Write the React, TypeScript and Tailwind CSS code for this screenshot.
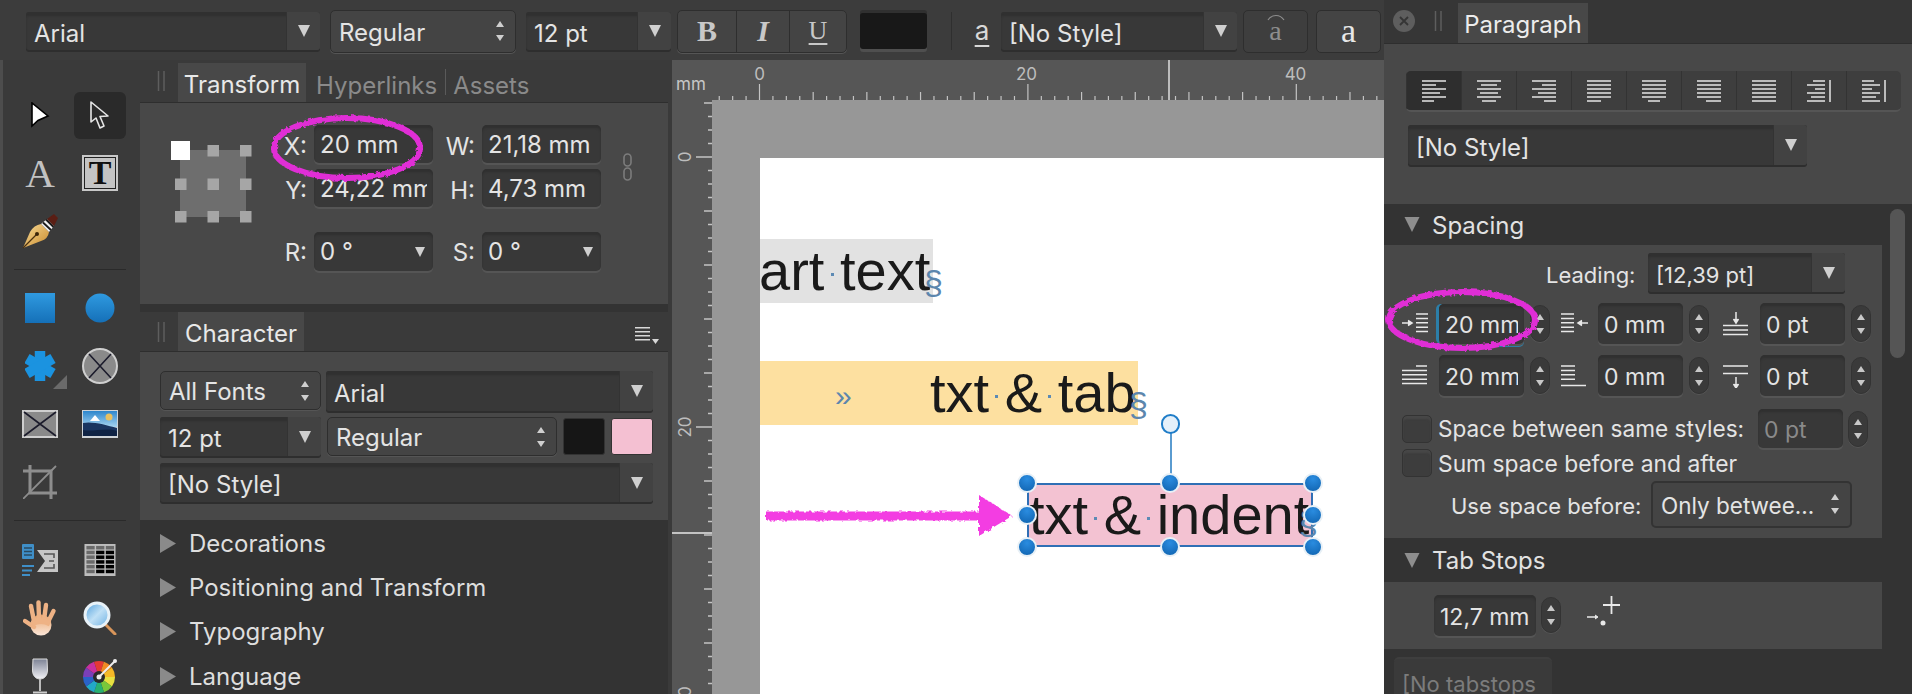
import React from "react";

const Tri = ({ c = "#cfcfcf", w = 12, h = 12 }: { c?: string; w?: number; h?: number }) => (
  <svg width={w} height={h} viewBox="0 0 12 12"><polygon points="0,0 12,0 6,12" fill={c} /></svg>
);
const UpDown = ({ c = "#cfcfcf", w = 10 }: { c?: string; w?: number }) => (
  <svg width={w} height={22} viewBox="0 0 10 22">
    <polygon points="5,1 9,7 1,7" fill={c} />
    <polygon points="5,21 9,15 1,15" fill={c} />
  </svg>
);
const Drop = ({ className = "", label, arrow = "w-[34px]" }: { className?: string; label: string; arrow?: string }) => (
  <div className={`flex items-stretch rounded-[3px] bg-[#383838] shadow-[inset_0_4px_2px_#303030,0_2px_0_#2e2e2e] ${className}`}>
    <div className="flex-1 min-w-0 pl-[8px] pt-[5px] flex items-center overflow-hidden whitespace-nowrap">{label}</div>
    <div className={`${arrow} border-l border-[#333] bg-[#424242] rounded-r-[3px] flex items-center justify-center`}><Tri /></div>
  </div>
);
const Sel = ({ className = "", label }: { className?: string; label: string }) => (
  <div className={`flex items-center justify-between pl-[8px] pr-[10px] rounded-[5px] bg-[#444444] border border-[#2e2e2e] shadow-[0_1px_0_#555] ${className}`}>
    <span className="whitespace-nowrap pt-[3px]">{label}</span>
    <UpDown />
  </div>
);
const Field = ({ className = "", label }: { className?: string; label: string }) => (
  <div className={`flex items-center pl-[6px] pr-[6px] pt-[2px] rounded-[5px] bg-[#383838] shadow-[inset_0_3px_2px_#303030,0_2px_0_#555] ${className}`}>
    <span className="block w-full overflow-hidden whitespace-nowrap">{label}</span>
  </div>
);
const Stepper = ({ className = "" }: { className?: string }) => (
  <div className={`w-[20px] rounded-full bg-[#3a3a3a] border border-[#333] shadow-[0_1px_0_#555] flex items-center justify-center ${className}`}><UpDown c="#c8c8c8" /></div>
);
const Grip = ({ className = "" }: { className?: string }) => (
  <svg className={className} width="9" height="22" viewBox="0 0 9 22"><path d="M1.5 1V21M7 1V21" stroke="#5e5e5e" strokeWidth="1.5" /></svg>
);

/* ---------- tool icons ---------- */
const ToolArrow = () => (
  <svg width="20" height="26" viewBox="0 0 20 26"><path d="M2 1V24L8 18.5 18 14Z" fill="#fff" stroke="#000" strokeWidth="1.6" /></svg>
);
const NodeArrow = () => (
  <svg width="22" height="30" viewBox="0 0 22 30"><path d="M2 2V22L7 18 11 28 15 26 11 16.5 19 16Z" fill="#2a2a2a" stroke="#e6e6e6" strokeWidth="1.6" strokeLinejoin="round" /></svg>
);
const Pen = () => (
  <svg width="36" height="36" viewBox="0 0 36 36">
    <defs><linearGradient id="nib" x1="0" y1="0" x2="1" y2="1"><stop offset="0" stopColor="#f8dc98" /><stop offset="1" stopColor="#c98a2c" /></linearGradient></defs>
    <path d="M1 35L8 19Q12 12 19 11L27 19Q26 26 19 28Z" fill="url(#nib)" />
    <path d="M1 35L15 21" stroke="#4a3010" strokeWidth="1.200" /><circle cx="15" cy="21" r="2" fill="#3a2408" />
    <path d="M19 11L27 19 32 13 25 6Z" fill="#f0f0f0" />
    <path d="M21 9.500L29 17M24 6.500L31.500 14" stroke="#1a1a1a" strokeWidth="1.800" />
    <path d="M25 6L32 13 36 5 32 1Z" fill="#5a1e14" />
  </svg>
);
const BlueSq = () => (
  <svg width="30" height="30" viewBox="0 0 30 30"><defs><linearGradient id="b1" x1="0" y1="0" x2="0" y2="1"><stop offset="0" stopColor="#2f9ae0" /><stop offset="1" stopColor="#1570b8" /></linearGradient></defs><rect width="30" height="30" fill="url(#b1)" /></svg>
);
const BlueCircle = () => (
  <svg width="30" height="30" viewBox="0 0 30 30"><circle cx="15" cy="15" r="14.500" fill="url(#b1)" /></svg>
);
const Cog = () => (
  <svg width="42" height="38" viewBox="0 0 42 38">
    <g stroke="#1b93e0" strokeWidth="10.500">
      <path d="M15 0V30" />
      <path d="M2 7.500L28 22.500" />
      <path d="M2 22.500L28 7.500" />
    </g>
    <polygon points="28,38 42,38 42,24" fill="#6a6a6a" />
  </svg>
);
const CrossCircle = () => (
  <svg width="36" height="36" viewBox="0 0 36 36"><circle cx="18" cy="18" r="17" fill="#8a8a8a" stroke="#cfcfcf" strokeWidth="2" /><path d="M7 6L29 30M29 6L7 30" stroke="#1c1c2c" strokeWidth="1.600" /></svg>
);
const CrossRect = () => (
  <svg width="36" height="28" viewBox="0 0 36 28"><rect x="1" y="1" width="34" height="26" fill="#8a8a8a" stroke="#cfcfcf" strokeWidth="2" /><path d="M2 2L34 26M34 2L2 26" stroke="#1c1c2c" strokeWidth="1.600" /></svg>
);
const Pic = () => (
  <svg width="36" height="28" viewBox="0 0 36 28">
    <defs><linearGradient id="sky" x1="0" y1="0" x2="0" y2="1"><stop offset="0" stopColor="#2d86cc" /><stop offset="1" stopColor="#a6d4f0" /></linearGradient></defs>
    <rect width="36" height="28" fill="#cfd4d8" /><rect x="1" y="1" width="34" height="16" fill="url(#sky)" />
    <circle cx="27" cy="7" r="3.500" fill="#e8c060" /><path d="M8 11L13 5 18 11Z" fill="#fff" />
    <path d="M1 13C10 11 24 15 35 18V26H1Z" fill="#1a3560" /><path d="M1 20C12 22 24 17 35 21V26H1Z" fill="#0f2344" />
  </svg>
);
const Crop = () => (
  <svg width="34" height="34" viewBox="0 0 34 34" fill="none" stroke="#8d8d8d" strokeWidth="3"><path d="M7 0V28H34M0 6H28V34" /><path d="M0 34L33 1" strokeWidth="1.800" /></svg>
);
const FlowIcon = () => (
  <svg width="37" height="33" viewBox="0 0 37 33">
    <rect x="0" y="0" width="12" height="15" rx="1" fill="#3f8fc8" />
    <path d="M2 4H10M2 7.500H10M2 11H10" stroke="#2a4a60" strokeWidth="1.400" />
    <path d="M0 22H12M0 26.500H10M0 31H8" stroke="#3f8fc8" strokeWidth="2" />
    <path d="M15 6H36V28H15L23 17Z" fill="#c6c6c6" /><path d="M22 10H32V14M27 17H32M22 24H32V20" stroke="#565656" strokeWidth="1.600" fill="none" />
  </svg>
);
const TableIcon = () => {
  const cells: React.ReactNode[] = [];
  for (let r = 0; r < 6; r++) for (let c = 0; c < 3; c++) {
    const dark = r > 0 && c > 0;
    cells.push(<rect key={`${r}-${c}`} x={2 + c * 10} y={2 + r * 4.9} width={8.500} height={3.600} fill={dark ? "#000" : "#6a6a6a"} />);
  }
  return (<svg width="32" height="32" viewBox="0 0 32 33"><rect width="32" height="33" fill="#bdbdbd" />{cells}</svg>);
};
const Hand = () => (
  <svg width="34" height="36" viewBox="0 0 34 36">
    <defs><linearGradient id="hd" x1="0" y1="0" x2="0" y2="1"><stop offset="0" stopColor="#e8a56e" /><stop offset="1" stopColor="#fbe6d8" /></linearGradient></defs>
    <g fill="url(#hd)">
      <ellipse cx="18" cy="25" rx="10.500" ry="10.500" />
    </g>
    <g stroke="#eeb285" strokeLinecap="round" strokeWidth="4.400">
      <path d="M11 21L8 6" /><path d="M16 20L15.500 2.500" /><path d="M21 20L23 5" /><path d="M25 22L30.500 11" /><path d="M11 27L2 21" />
    </g>
    <path d="M9 24Q18 19 27 24" stroke="#eeb285" strokeWidth="5" fill="none" />
  </svg>
);
const Magnifier = () => (
  <svg width="34" height="34" viewBox="0 0 34 34">
    <defs><linearGradient id="gl" x1="0" y1="0" x2="1" y2="1"><stop offset="0" stopColor="#4f9fdc" /><stop offset="0.5" stopColor="#bfe0f6" /><stop offset="1" stopColor="#6db0e2" /></linearGradient></defs>
    <path d="M22 23L32 33" stroke="#d8955a" strokeWidth="3" strokeLinecap="round" />
    <circle cx="14" cy="14" r="12" fill="url(#gl)" stroke="#e8f2f8" strokeWidth="3" />
  </svg>
);
const Wine = () => (
  <svg width="18" height="36" viewBox="0 0 18 36" fill="none">
    <defs><linearGradient id="wn" x1="0" y1="0" x2="0" y2="1"><stop offset="0" stopColor="#7c8294" /><stop offset="1" stopColor="#f2f2f6" /></linearGradient></defs>
    <path d="M2 1H16L16.500 12C16.500 18 13 21 9 21 5 21 1.500 18 1.500 12Z" fill="url(#wn)" stroke="#ddd" strokeWidth="1" />
    <path d="M9 21V33" stroke="#bbb" strokeWidth="2" /><path d="M2 34.500H16" stroke="#ccc" strokeWidth="2" />
  </svg>
);
const Wheel = () => {
  const cols = ["#e8e040", "#7ac83a", "#28b070", "#22a8c8", "#2a62c8", "#7a3fb8", "#c830a0", "#e53935", "#f08a24", "#f5b827"];
  const R = 16, cx = 16, cy = 19;
  const paths = cols.map((c, i) => {
    const a0 = (i / cols.length) * Math.PI * 2, a1 = ((i + 1) / cols.length) * Math.PI * 2;
    return <path key={c} d={`M${cx} ${cy}L${cx + R * Math.cos(a0)} ${cy + R * Math.sin(a0)}A${R} ${R} 0 0 1 ${cx + R * Math.cos(a1)} ${cy + R * Math.sin(a1)}Z`} fill={c} />;
  });
  return (
    <svg width="34" height="36" viewBox="0 0 34 36">
      {paths}
      <circle cx={cx} cy={cy} r="6" fill="#2a2a2a" />
      <path d={`M${cx} ${cy}L32 3`} stroke="#eee" strokeWidth="2" />
      <circle cx={cx} cy={cy} r="2.500" fill="#eee" /><circle cx="32" cy="3" r="2" fill="#eee" />
    </svg>
  );
};

/* ---------- small panel icons ---------- */
const AnchorWidget = () => {
  const xs = [4, 36.500, 69], ys = [4, 37.500, 70];
  return (
    <svg className="mt-[38px] ml-[31px] shrink-0" width="82" height="82" viewBox="0 0 82 82">
      <rect x="9" y="9" width="66" height="67" fill="#6e6e6e" />
      {ys.map((y) => xs.map((x) => (x === 4 && y === 4 ? null : <rect key={`${x}${y}`} x={x} y={y} width="11.500" height="11.500" fill="#a6a6a6" />)))}
      <rect x="0" y="0" width="19" height="19" fill="#fff" />
    </svg>
  );
};
const Chain = () => (
  <svg className="ml-[22px] mt-[50px] shrink-0" width="9" height="28" viewBox="0 0 9 28" fill="none" stroke="#7c7c7c" strokeWidth="1.600"><rect x="1" y="1" width="7" height="12" rx="3.500" /><rect x="1" y="15" width="7" height="12" rx="3.500" /></svg>
);
const Lines = ({ w = 24, rows }: { w?: number; rows: [number, number][] }) => (
  <svg width={w} height="22" viewBox={`0 0 ${w} 22`} stroke="#e6e6e6" strokeWidth="1.500">
    {rows.map(([a, b], i) => <path key={i} d={`M${a} ${1 + i * 4}H${b}`} />)}
  </svg>
);
const aligns: [number, number][][] = [
  [[0, 24], [0, 14], [0, 24], [0, 18], [0, 24], [0, 12]],
  [[0, 24], [4, 20], [0, 24], [3, 21], [0, 24], [5, 19]],
  [[0, 24], [10, 24], [0, 24], [6, 24], [0, 24], [12, 24]],
  [[0, 24], [0, 24], [0, 24], [0, 24], [0, 24], [0, 14]],
  [[0, 24], [0, 24], [0, 24], [0, 24], [0, 24], [6, 18]],
  [[0, 24], [0, 24], [0, 24], [0, 24], [0, 24], [9, 24]],
  [[0, 24], [0, 24], [0, 24], [0, 24], [0, 24], [0, 24]],
];
const SpineIcon = ({ right }: { right?: boolean }) => (
  <svg width="25" height="22" viewBox="0 0 25 22" stroke="#e6e6e6" strokeWidth="1.500">
    {[0, 1, 2, 3, 4, 5].map((i) => {
      const s = [6, 0, 8, 0, 4, 0][i];
      return <path key={i} d={right ? `M${s} ${1 + i * 4}H18` : `M0 ${1 + i * 4}H${18 - s}`} />;
    })}
    <path d="M23 0V22" />
  </svg>
);
const IndentL = () => (
  <svg width="26" height="24" viewBox="0 0 26 24" fill="none" stroke="#e8e8e8" strokeWidth="1.500"><path d="M14 2H26M14 6.400H26M14 10.800H26M14 15.200H26M14 19.600H26" /><path d="M0 11H8" /><path d="M6 8.500L10 11 6 13.500" fill="#e8e8e8" /></svg>
);
const IndentR = () => (
  <svg width="28" height="24" viewBox="0 0 28 24" fill="none" stroke="#e8e8e8" strokeWidth="1.500"><path d="M0 2H13M0 6.400H13M0 10.800H13M0 15.200H13M0 19.600H13" /><path d="M19 11H27" /><path d="M21 8.500L17 11 21 13.500" fill="#e8e8e8" /></svg>
);
const FirstL = () => (
  <svg width="26" height="24" viewBox="0 0 26 24" fill="none" stroke="#e8e8e8" strokeWidth="1.500"><path d="M14 2H25M0 6.400H25M0 10.800H25M0 15.200H25M0 19.600H25" /></svg>
);
const LastL = () => (
  <svg width="26" height="24" viewBox="0 0 26 24" fill="none" stroke="#e8e8e8" strokeWidth="1.500"><path d="M0 2H14M0 6.400H14M0 10.800H14M0 15.200H14M0 21.500H25" /></svg>
);
const Before = () => (
  <svg width="26" height="24" viewBox="0 0 26 24" fill="none" stroke="#e8e8e8" strokeWidth="1.500"><path d="M0 13.500H25M0 18H25M0 22.500H25" /><path d="M13 0V8" /><path d="M10.500 7L13 11 15.500 7" fill="#e8e8e8" /></svg>
);
const After = () => (
  <svg width="26" height="24" viewBox="0 0 26 24" fill="none" stroke="#e8e8e8" strokeWidth="1.500"><path d="M0 2H25M0 9.500H25" /><path d="M13 13V21" /><path d="M10.500 20L13 24 15.500 20" fill="#e8e8e8" /></svg>
);
const AddTab = () => (
  <svg width="33" height="33" viewBox="0 0 33 33" fill="none" stroke="#e8e8e8"><path d="M16 10H33M24.500 1V19" strokeWidth="1.800" /><path d="M0 22H10" strokeWidth="1.500" /><path d="M8 20L11 22 8 24" fill="#e8e8e8" /><circle cx="16" cy="28" r="2.500" fill="#e8e8e8" stroke="none" /></svg>
);

/* ---------- rulers ---------- */
const TopRuler = () => {
  const ticks: React.ReactNode[] = [];
  for (let i = -3; i <= 47; i++) {
    const x = 87.5 + i * 13.42;
    const h = i % 20 === 0 ? 16 : i % 4 === 0 ? 8 : 4;
    ticks.push(<path key={i} d={`M${x} ${40 - h}V40`} stroke="#c4c4c4" strokeWidth="1.200" />);
  }
  return (
    <svg className="block shrink-0" width="712" height="40" viewBox="0 0 712 40">
      <rect width="712" height="40" fill="#565656" />
      {ticks}
      <path d="M497 0V40" stroke="#e8e8e8" strokeWidth="1.400" />
      <text x="4" y="30" fontSize="17" fill="#c6c6c6">mm</text>
      <text x="87.500" y="20" fontSize="17" fill="#bdbdbd" textAnchor="middle">0</text>
      <text x="354.500" y="20" fontSize="17" fill="#bdbdbd" textAnchor="middle">20</text>
      <text x="623.500" y="20" fontSize="17" fill="#bdbdbd" textAnchor="middle">40</text>
    </svg>
  );
};
const LeftRuler = () => {
  const ticks: React.ReactNode[] = [];
  for (let i = -4; i <= 42; i++) {
    const y = 57 + i * 13.5;
    const h = i % 20 === 0 ? 16 : i % 4 === 0 ? 8 : 4;
    ticks.push(<path key={i} d={`M${40 - h} ${y}H40`} stroke="#c4c4c4" strokeWidth="1.500" />);
  }
  return (
    <svg className="block shrink-0" width="40" height="594" viewBox="0 0 40 594">
      <rect width="40" height="594" fill="#565656" />
      {ticks}
      <path d="M0 433H40" stroke="#e8e8e8" strokeWidth="1.400" />
      {[[57, "0"], [327, "20"], [597, "40"]].map(([y, t]) => (
        <text key={t as string} transform={`translate(19 ${y}) rotate(-90)`} fontSize="17" fill="#bdbdbd" textAnchor="middle">{t}</text>
      ))}
    </svg>
  );
};

const Dot = () => <span className="inline-block w-[3px] h-[3px] bg-[#5c8ab4] mx-[6.300px] mb-[14px]" />;
const Para = ({ className = "" }: { className?: string }) => (
  <span className={`absolute text-[34px] leading-none text-[#5c86ad] font-['Liberation_Sans',sans-serif] ${className}`}>§</span>
);
const Handle = ({ className = "" }: { className?: string }) => (
  <span className={`absolute w-[20px] h-[20px] -ml-[10px] -mt-[10px] rounded-full bg-[radial-gradient(circle_at_50%_25%,#2a8ce0,#0f62ae)] border-2 border-[#e8f0f6] ${className}`} />
);
const Page = () => (
  <div className="relative flex-1 bg-white font-['Liberation_Sans',sans-serif] text-[56px] leading-[64px] text-[#1a1a1a] overflow-hidden">
    <div className="absolute left-0 top-[81px] w-[173px] h-[64px] bg-[#e2e2e2] whitespace-nowrap -indent-[1px]">art<Dot />text<Para className="left-[165px] top-[26px]" /></div>
    <div className="absolute left-0 top-[203px] w-[378px] h-[64px] bg-[#fde0a0] whitespace-nowrap pl-[170px]">
      <span className="absolute left-[75px] top-[20px] text-[30px] leading-none text-[#5c86ad]">»</span>
      txt<Dot />&amp;<Dot />tab<Para className="left-[369px] top-[26px]" />
    </div>
    <div className="absolute left-[267px] top-[325px] w-[286px] h-[64px] bg-[#f3c2d2] border-2 border-[#2f6fb5] whitespace-nowrap leading-[60px]">
      txt<Dot />&amp;<Dot />indent<Para className="left-[270px] top-[20px] text-[26px]" />
    </div>
    <span className="absolute left-[410px] top-[274px] w-[1.500px] h-[44px] bg-[#5a9bd0]" />
    <span className="absolute left-[410px] top-[265px] w-[19px] h-[20px] -ml-[9px] -mt-[9.500px] rounded-full bg-[#e4f0fa] border-2 border-[#1f7dc8]" />
    <Handle className="left-[267px] top-[325px]" />
    <Handle className="left-[410px] top-[325px]" />
    <Handle className="left-[553px] top-[325px]" />
    <Handle className="left-[267px] top-[357px]" />
    <Handle className="left-[553px] top-[357px]" />
    <Handle className="left-[267px] top-[389px]" />
    <Handle className="left-[410px] top-[389px]" />
    <Handle className="left-[553px] top-[389px]" />
  </div>
);

const ListRow = ({ label }: { label: string }) => (
  <div className="h-[44.300px] flex items-center pl-[20px] text-[#dedede]">
    <svg width="16" height="19" viewBox="0 0 16 19"><polygon points="0,0 16,9.500 0,19" fill="#8a8a8a" /></svg>
    <span className="ml-[13px] pt-[1px]">{label}</span>
  </div>
);
const Section = ({ label, className = "" }: { label: string; className?: string }) => (
  <div className={`flex items-center bg-[#333333] pl-[18px] text-[24px] text-[#e2e2e2] ${className}`}>
    <Tri c="#8e8e8e" w={20} h={15} />
    <span className="ml-[10px] pt-[2px]">{label}</span>
  </div>
);
const Box = ({ className = "" }: { className?: string }) => (
  <div className={`w-[30px] h-[28px] shrink-0 rounded-[5px] bg-[#3d3d3d] border border-[#333] shadow-[inset_0_3px_2px_#474747] ${className}`} />
);
const FLabel = ({ label }: { label: string }) => (
  <span className="self-center justify-self-end pr-[7px] pt-[5px]">{label}</span>
);

export default function App() {
  return (
    <div className="relative w-[1912px] h-[694px] overflow-hidden flex bg-[#3a3a3a] text-[#e4e4e4] font-['Inter',sans-serif] text-[24px] leading-[30px]">
      {/* left: toolbar + panels + canvas */}
      <div className="w-[1384px] shrink-0 flex flex-col">
        <div className="h-[60px] shrink-0 flex items-center bg-[#3c3c3c] pl-[26px] pt-[2px]">
          <Drop className="w-[294px] h-[38px]" label="Arial" />
          <Sel className="w-[186px] h-[43px] ml-[10px]" label="Regular" />
          <Drop className="w-[145px] h-[38px] ml-[10px]" label="12 pt" />
          <div className="flex w-[170px] h-[43px] ml-[6px] rounded-[5px] bg-[#444] border border-[#2e2e2e] shadow-[0_1px_0_#555] font-['Liberation_Serif',serif] text-[30px] text-[#c8c8c8]">
            <div className="w-[58px] flex items-center justify-center font-bold">B</div>
            <div className="w-[53px] border-l border-[#2e2e2e] flex items-center justify-center italic font-bold">I</div>
            <div className="flex-1 border-l border-[#2e2e2e] flex items-center justify-center underline underline-offset-4 text-[26px]">U</div>
          </div>
          <div className="w-[67px] h-[36px] ml-[13px] bg-[#181818] rounded-[3px] shadow-[0_-3px_0_#303030,0_3px_0_#4f4f4f]" />
          <div className="w-px h-[38px] ml-[24px] bg-[#2f2f2f]" />
          <div className="w-[20px] ml-[20px] text-[26px] text-center text-[#d8d8d8] underline underline-offset-[5px]">a</div>
          <Drop className="w-[236px] h-[38px] ml-[9px]" label="[No Style]" />
          <div className="relative w-[65px] h-[43px] ml-[6px] rounded-[5px] bg-[#3e3e3e] border border-[#2e2e2e] flex items-center justify-center font-['Liberation_Serif',serif] text-[28px] text-[#8e8e8e]">
            <svg className="absolute top-[2px] left-[20px]" width="24" height="8" viewBox="0 0 24 8"><path d="M4 7C8 1 16 1 20 7" fill="none" stroke="#8e8e8e" strokeWidth="1.200" /></svg>
            a
          </div>
          <div className="w-[65px] h-[43px] ml-[8px] rounded-[5px] bg-[#444] border border-[#2e2e2e] flex items-center justify-center font-['Liberation_Serif',serif] text-[34px] text-[#e8e8e8]">a</div>
        </div>
        <div className="flex-1 min-h-0 flex">
          {/* tools */}
          <div className="w-[140px] shrink-0 bg-[#3a3a3a] border-l-[3px] border-[#4d4d4d] pl-[7px]">
            <div className="w-[120px] pt-[26px] grid grid-cols-2 auto-rows-[58px] place-items-center">
              <ToolArrow />
              <div className="w-[52px] h-[47px] rounded-[6px] bg-[#2a2a2a] flex items-center justify-center"><NodeArrow /></div>
              <span className="font-['Liberation_Serif',serif] text-[41px] leading-none text-[#c2c2c2]">A</span>
              <div className="w-[36px] h-[36px] border-2 border-[#c8c8c8] bg-[#c4c4c4] outline outline-1 -outline-offset-3 outline-[#222] flex items-center justify-center font-['Liberation_Serif',serif] font-bold text-[34px] text-[#111]">T</div>
              <Pen />
            </div>
            <div className="h-px w-[112px] ml-[4px] mt-[9px] bg-[#2a2a2a]" />
            <div className="w-[120px] mt-[9px] grid grid-cols-2 auto-rows-[58px] place-items-center">
              <BlueSq />
              <BlueCircle />
              <div className="ml-[12px] mt-[8px]"><Cog /></div>
              <CrossCircle />
              <CrossRect />
              <Pic />
              <Crop />
            </div>
            <div className="h-px w-[112px] ml-[4px] mt-[9px] bg-[#2a2a2a]" />
            <div className="w-[120px] mt-[10px] grid grid-cols-2 auto-rows-[58px] place-items-center">
              <FlowIcon />
              <TableIcon />
              <Hand />
              <Magnifier />
              <Wine />
              <Wheel />
            </div>
          </div>
          {/* Transform + Character */}
          <div className="w-[528px] shrink-0 flex flex-col bg-[#333333]">
            <div className="h-[43px] shrink-0 flex items-end bg-[#3a3a3a] border-b border-[#2e2e2e]">
              <Grip className="ml-[17px] mb-[10px]" />
              <div className="w-[128px] h-[39px] ml-[12px] pt-[5px] bg-[#484848] flex items-center justify-center text-[#e8e8e8]">Transform</div>
              <span className="ml-[10px] mb-[1px] text-[#8a8a8a]">Hyperlinks</span>
              <span className="ml-[8px] mb-[7px] w-px h-[26px] bg-[#5a5a5a]" />
              <span className="ml-[7px] mb-[1px] text-[#8a8a8a]">Assets</span>
            </div>
            <div className="h-[201px] shrink-0 bg-[#484848] flex items-start">
              <AnchorWidget />
              <div className="ml-[17px] mt-[22px] w-[331px] grid grid-cols-[44px_119px_49px_119px] grid-rows-[38px_38px_58px] gap-y-[6px]">
                <FLabel label="X:" /><Field label="20 mm" />
                <FLabel label="W:" /><Field label="21,18 mm" />
                <FLabel label="Y:" /><Field label="24,22 mm" />
                <FLabel label="H:" /><Field label="4,73 mm" />
                <span className="mt-[22px] self-center justify-self-end pr-[7px]">R:</span>
                <div className="mt-[19px] h-[39px] flex items-center justify-between rounded-[5px] bg-[#383838] shadow-[inset_0_3px_2px_#303030,0_2px_0_#555] pl-[6px] pr-[8px]">0 °<Tri w={10} h={10} /></div>
                <span className="mt-[22px] self-center justify-self-end pr-[7px]">S:</span>
                <div className="mt-[19px] h-[39px] flex items-center justify-between rounded-[5px] bg-[#383838] shadow-[inset_0_3px_2px_#303030,0_2px_0_#555] pl-[6px] pr-[8px]">0 °<Tri w={10} h={10} /></div>
              </div>
              <Chain />
            </div>
            <div className="h-[48px] shrink-0 mt-0 flex items-end bg-[#3a3a3a] border-t-[8px] border-[#333] border-b border-b-[#2e2e2e]">
              <Grip className="ml-[17px] mb-[8px]" />
              <div className="w-[126px] h-[39px] ml-[12px] pt-[4px] bg-[#484848] flex items-center justify-center text-[#e8e8e8]">Character</div>
              <svg className="ml-[331px] mb-[7px]" width="24" height="18" viewBox="0 0 24 18" fill="#d8d8d8"><path d="M0 1H15V2.600H0ZM0 5H15V6.600H0ZM0 9H15V10.600H0ZM0 13H15V14.600H0Z" /><polygon points="17,13 24,13 20.500,18" /></svg>
            </div>
            <div className="h-[168px] shrink-0 bg-[#484848] pt-[19px] pl-[20px]">
              <div className="flex">
                <Sel className="w-[161px] h-[39px]" label="All Fonts" />
                <Drop className="w-[327px] h-[40px] ml-[5px]" label="Arial" />
              </div>
              <div className="flex mt-[6px]">
                <Drop className="w-[161px] h-[39px]" label="12 pt" />
                <Sel className="w-[230px] h-[39px] ml-[6px]" label="Regular" />
                <div className="w-[42px] h-[37px] mt-[1px] ml-[6px] rounded-[3px] bg-[#161616] border border-[#333]" />
                <div className="w-[42px] h-[37px] mt-[1px] ml-[6px] rounded-[3px] bg-[#f4c0d2] border border-[#333]" />
              </div>
              <Drop className="w-[493px] h-[39px] mt-[7px]" label="[No Style]" />
            </div>
            <div className="pt-[1px]">
              <ListRow label="Decorations" />
              <ListRow label="Positioning and Transform" />
              <ListRow label="Typography" />
              <ListRow label="Language" />
            </div>
          </div>
          {/* canvas */}
          <div className="flex-1 min-w-0 flex flex-col border-l-[4px] border-[#3a3a3a] font-['Inter',sans-serif]">
            <TopRuler />
            <div className="flex-1 min-h-0 flex">
              <LeftRuler />
              <div className="flex-1 min-w-0 flex bg-[#979797] pt-[58px] pl-[48px]"><Page /></div>
            </div>
          </div>
        </div>
      </div>

      {/* Paragraph */}
      <div className="w-[528px] shrink-0 flex flex-col bg-[#333333] text-[22px]">
        <div className="h-[44px] shrink-0 flex items-end bg-[#363636] border-b border-[#2e2e2e]">
          <div className="w-[22px] h-[22px] ml-[9px] mb-[11px] rounded-full bg-[#5e5e5e] flex items-center justify-center">
            <svg width="10" height="10" viewBox="0 0 10 10"><path d="M1 1L9 9M9 1L1 9" stroke="#353535" strokeWidth="1.800" /></svg>
          </div>
          <Grip className="ml-[19px] mb-[11px]" />
          <div className="w-[130px] h-[40px] ml-[15px] pt-[4px] bg-[#484848] flex items-center justify-center text-[24px] text-[#ececec]">Paragraph</div>
        </div>
        <div className="h-[160px] shrink-0 bg-[#484848] pt-[27px] pl-[22px]">
          <div className="flex w-[495px] h-[41px] rounded-[5px] bg-[#3e3e3e] border-b-2 border-[#555] overflow-hidden">
            {aligns.map((r, i) => (
              <div key={i} className={`flex-1 flex items-center justify-center border-l border-[#333] ${i === 0 ? "bg-[#2e2e2e]" : ""}`}><Lines rows={r} /></div>
            ))}
            <div className="flex-1 flex items-center justify-center border-l border-[#333]"><SpineIcon right /></div>
            <div className="flex-1 flex items-center justify-center border-l border-[#333]"><SpineIcon /></div>
          </div>
          <Drop className="w-[399px] h-[40px] mt-[13px] ml-[2px] text-[24px]" label="[No Style]" />
        </div>
        <div className="flex-1 min-h-0 flex">
          <div className="w-[498px] shrink-0">
            <Section label="Spacing" className="h-[41px]" />
            <div className="h-[293px] bg-[#484848] pt-[8px]">
              <div className="flex items-center">
                <span className="ml-[162px] w-[94px] whitespace-nowrap pt-[4px]">Leading:</span>
                <Drop className="w-[197px] h-[39px] ml-[8px]" label="[12,39 pt]" />
              </div>
              <div className="flex items-center h-[41px] mt-[11px]">
                <div className="ml-[18px]"><IndentL /></div>
                <div className="ml-[11px] rounded-[5px] shadow-[-3px_0_0_#2c7ea8,0_3px_0_#2c7ea8]"><Field className="w-[85px] h-[40px] text-[23px]" label="20 mm" /></div>
                <Stepper className="ml-[6px] h-[37px]" />
                <div className="ml-[11px]"><IndentR /></div>
                <Field className="ml-[9px] w-[85px] h-[41px] text-[23px]" label="0 mm" />
                <Stepper className="ml-[6px] h-[37px]" />
                <div className="ml-[14px]"><Before /></div>
                <Field className="ml-[11px] w-[85px] h-[41px] text-[23px]" label="0 pt" />
                <Stepper className="ml-[6px] h-[37px]" />
              </div>
              <div className="flex items-center h-[41px] mt-[11px]">
                <div className="ml-[18px]"><FirstL /></div>
                <Field className="ml-[11px] w-[85px] h-[41px] text-[23px]" label="20 mm" />
                <Stepper className="ml-[6px] h-[37px]" />
                <div className="ml-[11px]"><LastL /></div>
                <Field className="ml-[11px] w-[85px] h-[41px] text-[23px]" label="0 mm" />
                <Stepper className="ml-[6px] h-[37px]" />
                <div className="ml-[14px]"><After /></div>
                <Field className="ml-[11px] w-[85px] h-[41px] text-[23px]" label="0 pt" />
                <Stepper className="ml-[6px] h-[37px]" />
              </div>
              <div className="flex items-center h-[39px] mt-[13px]">
                <Box className="ml-[18px]" />
                <span className="ml-[6px] w-[320px] whitespace-nowrap text-[22.600px]">Space between same styles:</span>
                <Field className="w-[85px] h-[39px] text-[#8a8a8a] text-[23px]" label="0 pt" />
                <Stepper className="ml-[5px] h-[36px]" />
              </div>
              <div className="flex items-center h-[28px] mt-[1px]">
                <Box className="ml-[18px]" />
                <span className="ml-[6px] pt-[1px] whitespace-nowrap text-[22.800px]">Sum space before and after</span>
              </div>
              <div className="flex items-center h-[48px] mt-[3px]">
                <span className="ml-[67px] w-[200px] whitespace-nowrap pt-[3px]">Use space before:</span>
                <div className="w-[201px] h-[47px] flex items-center justify-between pl-[8px] pr-[10px] rounded-[5px] border-2 border-[#333] bg-[#444]"><span className="whitespace-nowrap pt-[3px] text-[22.500px]">Only betwee...</span><UpDown /></div>
              </div>
            </div>
            <Section label="Tab Stops" className="h-[44px]" />
            <div className="h-[68px] bg-[#484848] pt-[13px] flex items-start border-b border-[#333]">
              <Field className="ml-[50px] w-[102px] h-[41px] text-[23px]" label="12,7 mm" />
              <Stepper className="ml-[5px] h-[36px] mt-[2px]" />
              <div className="ml-[26px]"><AddTab /></div>
            </div>
            <div className="pl-[10px] pt-[7px]">
              <div className="w-[158px] h-[60px] pl-[8px] pt-[10px] rounded-t-[5px] bg-[#3a3a3a] border-t-2 border-[#3e3e3e] text-[#7c7c7c] whitespace-nowrap overflow-hidden">[No tabstops</div>
            </div>
          </div>
          <div className="flex-1">
            <div className="w-[15px] h-[149px] mt-[5px] ml-[8px] rounded-full bg-[#555555]" />
          </div>
        </div>
      </div>

      {/* hand-drawn annotations over the screenshot */}
      <svg className="absolute inset-0 pointer-events-none" width="1912" height="694" viewBox="0 0 1912 694">
        <defs>
          <filter id="rough" x="-10%" y="-30%" width="120%" height="160%">
            <feTurbulence type="fractalNoise" baseFrequency="0.25" numOctaves="2" seed="3" />
            <feDisplacementMap in="SourceGraphic" scale="4" />
          </filter>
        </defs>
        <g filter="url(#rough)">
          <ellipse cx="347" cy="148" rx="73" ry="30" fill="none" stroke="#e02fd6" strokeWidth="6" />
          <ellipse cx="1462" cy="320" rx="73" ry="28" fill="none" stroke="#e02fd6" strokeWidth="6" />
          <path d="M766 516H985" stroke="#f33ce2" strokeWidth="9" />
          <polygon points="979,495 1012,516 979,536" fill="#f33ce2" />
        </g>
      </svg>
    </div>
  );
}
